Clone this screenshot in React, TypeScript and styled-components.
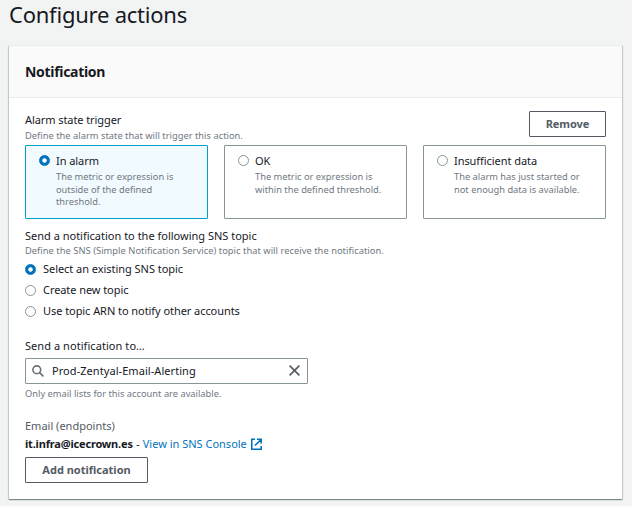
import React from 'react';
import styled, { createGlobalStyle } from 'styled-components';

const Global = createGlobalStyle`
  * { box-sizing: border-box; }
  body { margin: 0; background: #f2f3f3; overflow: hidden; font-family: "Noto Sans", sans-serif; font-size: 11px; line-height: 17px; color: #16191f; }
`;
const Page = styled.main`
  height: 506px;
  padding: 0 10px 0 9px;
`;
const Title = styled.h1`
  height: 45px;
  margin: 0;
  font-size: 22px;
  line-height: 29px;
  font-weight: 400;
  letter-spacing: -0.23px;
`;
const Card = styled.section`
  height: 454px;
  background: #fff;
  border-top: 1px solid #eaeded;
  box-shadow: 0 1px 1px rgba(0, 28, 36, 0.3), 1px 1px 1px rgba(0, 28, 36, 0.15), -1px 1px 1px rgba(0, 28, 36, 0.15);
`;
const Header = styled.header`
  height: 52px;
  padding: 0 16px;
  display: flex;
  align-items: center;
  background: #fafafa;
  border-bottom: 1px solid #eaeded;
  font-size: 14px;
  font-weight: 700;
  letter-spacing: -0.3px;
`;
const Body = styled.div`
  padding: 13px 16px 0;
`;
const Line = styled.div<{ $ls?: number; $muted?: boolean }>`
  white-space: nowrap;
  letter-spacing: ${p => p.$ls ?? 0}px;
  color: ${p => (p.$muted ? '#545b64' : '#16191f')};
`;
const Hint = styled.div<{ $ls?: number }>`
  font-size: 9.3px;
  line-height: 13px;
  letter-spacing: ${p => p.$ls ?? 0}px;
  color: #70777f;
  white-space: nowrap;
`;
const Top = styled.div`
  display: flex;
  justify-content: space-between;
  height: 34px;
`;
const TopText = styled.div`
  display: flex;
  flex-direction: column;
  gap: 1px;
`;
const Button = styled.button<{ $width: number; $ls?: number }>`
  display: block;
  width: ${p => p.$width}px;
  height: 26px;
  padding: 0 0 1px;
  border: 1px solid #545b64;
  border-radius: 1px;
  background: #fff;
  color: #545b64;
  font: 700 11px "Noto Sans", sans-serif;
  letter-spacing: ${p => p.$ls ?? 0}px;
  white-space: nowrap;
`;
const Tiles = styled.div`
  display: grid;
  grid-template-columns: repeat(3, 183px);
  gap: 16px;
  height: 74px;
`;
const Tile = styled.label<{ $on?: boolean }>`
  display: flex;
  gap: 6px;
  padding: 6px 13px;
  border: 1px solid ${p => (p.$on ? '#00a1c9' : '#879596')};
  border-radius: 1px;
  background: ${p => (p.$on ? '#f1faff' : '#fff')};
`;
const TileHints = styled.div`
  padding-top: 2px;

  ${Hint} {
    line-height: 12.6px;
  }
`;
const Radio = styled.span<{ $on?: boolean }>`
  width: 11px;
  height: 11px;
  margin-top: 3px;
  flex: none;
  border-radius: 50%;
  border: 1px solid ${p => (p.$on ? '#0073bb' : '#879596')};
  background: ${p => (p.$on ? 'radial-gradient(circle, #fff 1.8px, #0073bb 2.6px)' : '#fff')};
`;
const Group = styled.div`
  margin-top: 8px;
`;
const Choices = styled.div`
  display: grid;
  gap: 4px;
  margin-top: 3px;

  ${Radio} {
    margin-top: 4px;
  }
`;
const Choice = styled.label`
  display: flex;
  gap: 7px;
`;
const Field = styled.div`
  margin-top: 18px;
`;
const Search = styled.div`
  width: 283px;
  height: 26px;
  margin: 4px 0 3px;
  padding: 0 7px 1px 6px;
  display: flex;
  align-items: center;
  border: 1px solid #879596;
  border-radius: 1px;
`;
const Query = styled(Line)`
  flex: 1;
  margin-left: 8px;
  padding-bottom: 1px;
`;
const Endpoints = styled.div`
  margin-top: 17px;
`;
const EmailRow = styled.div`
  display: flex;
  align-items: center;
  height: 17px;
  margin: 1px 0 5px;
  white-space: nowrap;
`;
const Email = styled.strong`
  letter-spacing: -0.18px;
`;
const Dash = styled.span`
  width: 10px;
  text-align: center;
`;
const Link = styled.a`
  display: flex;
  align-items: center;
  gap: 4px;
  color: #0073bb;
`;

const tiles = [
  { name: 'In alarm', lines: ['The metric or expression is', 'outside of the defined', 'threshold.'], on: true },
  { name: 'OK', lines: ['The metric or expression is', 'within the defined threshold.'] },
  { name: 'Insufficient data', lines: ['The alarm has just started or', 'not enough data is available.'] },
];

export default function App() {
  return (
    <>
      <Global />
      <Page>
        <Title>Configure actions</Title>
        <Card>
          <Header>Notification</Header>
          <Body>
            <Top>
              <TopText>
                <Line $ls={-0.08}>Alarm state trigger</Line>
                <Hint $ls={0.02}>Define the alarm state that will trigger this action.</Hint>
              </TopText>
              <Button $width={77} $ls={-0.05}>Remove</Button>
            </Top>
            <Tiles>
              {tiles.map(t => (
                <Tile key={t.name} $on={t.on}>
                  <Radio $on={t.on} />
                  <div>
                    <Line $ls={-0.06}>{t.name}</Line>
                    <TileHints>
                      {t.lines.map(l => <Hint key={l}>{l}</Hint>)}
                    </TileHints>
                  </div>
                </Tile>
              ))}
            </Tiles>
            <Group>
              <Line>Send a notification to the following SNS topic</Line>
              <Hint $ls={0.045}>Define the SNS (Simple Notification Service) topic that will receive the notification.</Hint>
              <Choices>
                <Choice><Radio $on /><Line $ls={-0.04}>Select an existing SNS topic</Line></Choice>
                <Choice><Radio /><Line $ls={-0.07}>Create new topic</Line></Choice>
                <Choice><Radio /><Line $ls={-0.06}>Use topic ARN to notify other accounts</Line></Choice>
              </Choices>
            </Group>
            <Field>
              <Line $ls={0.06}>Send a notification to…</Line>
              <Search>
                <svg width="12" height="12" viewBox="0 0 12 12" fill="none" stroke="#687078" strokeWidth="1.6">
                  <circle cx="4.8" cy="4.8" r="3.9" />
                  <path d="M7.6 7.6L11.4 11.4" />
                </svg>
                <Query $ls={0.06}>Prod-Zentyal-Email-Alerting</Query>
                <svg width="11" height="11" viewBox="0 0 11 11" fill="none" stroke="#545b64" strokeWidth="1.6">
                  <path d="M.6.6l9.8 9.8M10.4.6L.6 10.4" />
                </svg>
              </Search>
              <Hint>Only email lists for this account are available.</Hint>
            </Field>
            <Endpoints>
              <Line $muted>Email (endpoints)</Line>
              <EmailRow>
                <Email>it.infra@icecrown.es</Email>
                <Dash>-</Dash>
                <Link>
                  View in SNS Console
                  <svg width="11" height="12" viewBox="0 0 11 12" fill="none" stroke="#0073bb" strokeWidth="1.6">
                    <path d="M4 1.25H.75v10h9.5V8M6 1.25h4.25V5.5M10 1.5L4 7.5" />
                  </svg>
                </Link>
              </EmailRow>
              <Button $width={123}>Add notification</Button>
            </Endpoints>
          </Body>
        </Card>
      </Page>
    </>
  );
}
